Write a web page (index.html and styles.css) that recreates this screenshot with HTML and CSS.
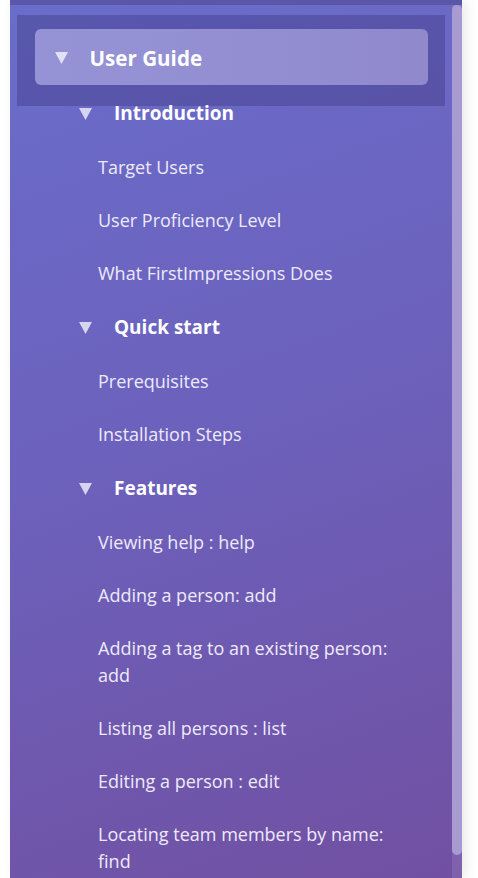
FILE: index.html
```html
<!DOCTYPE html>
<html lang="en">
<head>
<meta charset="utf-8">
<title>User Guide</title>
<link rel="stylesheet" href="styles.css">
</head>
<body>
<aside class="sidebar">
  <div class="top-strip"></div>
  <div class="scroll-area">
    <nav class="toc">
      <div class="active-band">
        <a class="active-item" href="#">
          <svg class="caret" width="13" height="12" viewBox="0 0 13 12"><polygon points="0,0 13,0 6.5,12"/></svg>
          <span>User Guide</span>
        </a>
      </div>
      <ul class="toc-list">
        <li class="toc-heading">
          <svg class="caret" width="13" height="12" viewBox="0 0 13 12"><polygon points="0,0 13,0 6.5,12"/></svg>
          <span>Introduction</span>
        </li>
        <li class="toc-item">Target Users</li>
        <li class="toc-item">User Proficiency Level</li>
        <li class="toc-item">What FirstImpressions Does</li>
        <li class="toc-heading">
          <svg class="caret" width="13" height="12" viewBox="0 0 13 12"><polygon points="0,0 13,0 6.5,12"/></svg>
          <span>Quick start</span>
        </li>
        <li class="toc-item">Prerequisites</li>
        <li class="toc-item">Installation Steps</li>
        <li class="toc-heading">
          <svg class="caret" width="13" height="12" viewBox="0 0 13 12"><polygon points="0,0 13,0 6.5,12"/></svg>
          <span>Features</span>
        </li>
        <li class="toc-item">Viewing help : help</li>
        <li class="toc-item">Adding a person: add</li>
        <li class="toc-item">Adding a tag to an existing person: add</li>
        <li class="toc-item">Listing all persons : list</li>
        <li class="toc-item">Editing a person : edit</li>
        <li class="toc-item">Locating team members by name: find</li>
      </ul>
    </nav>
    <div class="scrollbar">
      <div class="thumb"></div>
    </div>
  </div>
</aside>
</body>
</html>
```

FILE: styles.css
```css
html, body {
  margin: 0;
  padding: 0;
  background: #ffffff;
  height: 878px;
  overflow: hidden;
}

body {
  display: flex;
  font-family: "Open Sans", "Noto Sans", sans-serif;
}

.sidebar {
  margin-left: 10px;
  width: 452px;
  height: 878px;
  display: flex;
  flex-direction: column;
  background: linear-gradient(160deg, #6a6dcb 0%, #6c62bd 45%, #7150a2 100%);
  box-shadow: 4px 0 12px rgba(0, 0, 0, 0.09);
  overflow: hidden;
}

.top-strip {
  height: 5px;
  flex: none;
  background: #5b57a8;
}

.scroll-area {
  flex: 1;
  display: flex;
  min-height: 0;
}

.toc {
  flex: 1;
  min-width: 0;
  overflow: hidden;
}

.active-band {
  margin: 10px 7px 0 7px;
  padding: 14px 17px 21px 17.5px;
  background: rgba(30, 22, 80, 0.24);
}

.active-item {
  display: flex;
  align-items: center;
  height: 56px;
  padding-left: 20px;
  border-radius: 6px;
  background: linear-gradient(90deg, #9593d6 0%, #908acd 100%);
  color: #ffffff;
  text-decoration: none;
  font-weight: 700;
  font-size: 20.6px;
  padding-top: 2px;
  box-sizing: border-box;
}

.active-item .caret {
  margin-right: 22px;
  fill: rgba(255, 255, 255, 0.72);
}

.toc-list {
  list-style: none;
  margin: -6px 0 0 0;
  padding: 0;
}

.toc-heading {
  display: flex;
  align-items: center;
  padding: 14px 0 14px 69px;
  line-height: 27px;
  font-size: 19px;
  font-weight: 700;
  color: #ffffff;
}

.toc-list > .toc-heading:first-child {
  padding-top: 0;
}

.toc-heading .caret {
  margin-right: 22px;
  fill: rgba(255, 255, 255, 0.72);
}

.toc-item {
  padding: 13px 42px 13px 88px;
  line-height: 27px;
  font-size: 18px;
  color: #eeeafa;
}

.scrollbar {
  flex: none;
  width: 10px;
  background: rgba(255, 255, 255, 0.1);
}

.thumb {
  height: 850px;
  border-radius: 5px;
  background: #a89bd1;
}
```
